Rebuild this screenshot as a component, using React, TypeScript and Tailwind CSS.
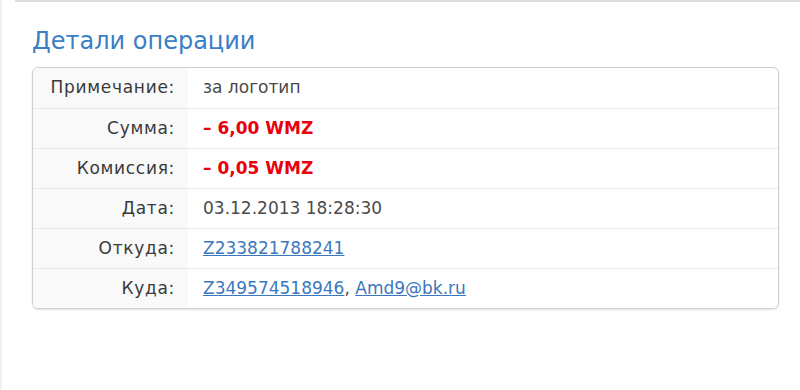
const rows: { label: string; value: React.ReactNode }[] = [
  { label: "Примечание:", value: <span className="text-[#4a4a4a]">за логотип</span> },
  { label: "Сумма:", value: <span className="font-bold text-[#e8000c]">– 6,00 WMZ</span> },
  { label: "Комиссия:", value: <span className="font-bold text-[#e8000c]">– 0,05 WMZ</span> },
  { label: "Дата:", value: <span className="text-[#4a4a4a]">03.12.2013 18:28:30</span> },
  {
    label: "Откуда:",
    value: <a href="#" className="text-[#3a78bd] underline">Z233821788241</a>,
  },
  {
    label: "Куда:",
    value: (
      <span className="text-[#4a4a4a]">
        <a href="#" className="text-[#3a78bd] underline">Z349574518946</a>,{" "}
        <a href="#" className="text-[#3a78bd] underline">Amd9@bk.ru</a>
      </span>
    ),
  },
];

export default function App() {
  return (
    <div
      className="h-[390px] w-[800px] bg-white border-l-2 border-[#f1f1f1]"
      style={{ fontFamily: '"DejaVu Sans", Verdana, sans-serif' }}
    >
      <div className="ml-[13px] border-t-2 border-[#dedede] pl-[17px] pr-[21px]">
        <h2 className="pt-[24px] pb-[10px] text-[24px] leading-[31px] text-[#3a7fc4]">Детали операции</h2>
        <div className="overflow-hidden rounded-[6px] border border-[#cfcfcf] shadow-[0_1px_2px_rgba(0,0,0,0.12)]">
          {rows.map((r, i) => (
            <div
              key={r.label}
              className={`flex h-[40px] text-[17px] ${i > 0 ? "border-t border-[#e8e8e8]" : ""}`}
            >
              <div className="flex w-[155px] items-center justify-end bg-[#f9f9f9] pr-[13px] tracking-[0.7px] text-[#3a3a3a]">
                {r.label}
              </div>
              <div className="flex flex-1 items-center pl-[15px]">{r.value}</div>
            </div>
          ))}
        </div>
      </div>
    </div>
  );
}
